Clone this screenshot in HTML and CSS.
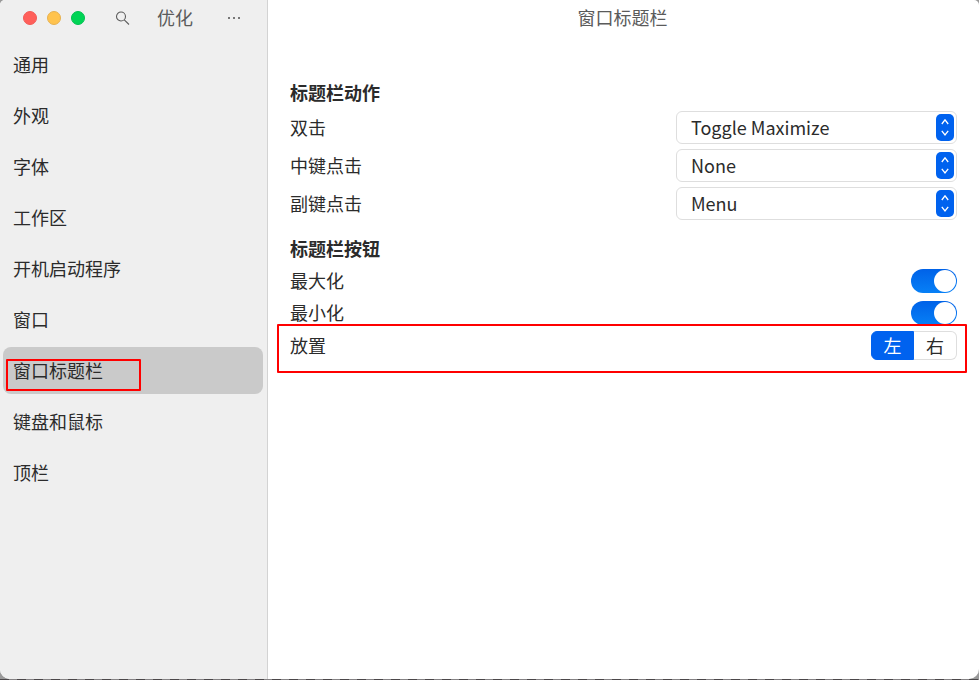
FILE: index.html
```html
<!DOCTYPE html>
<html lang="zh-CN">
<head>
<meta charset="utf-8">
<title>优化</title>
<link rel="stylesheet" href="styles.css">
</head>
<body>
<div class="window">
  <aside class="sidebar">
    <header class="side-header">
      <div class="lights"><i class="light close"></i><i class="light min"></i><i class="light max"></i></div>
      <svg class="search" width="16" height="16" viewBox="0 0 16 16"><circle cx="6" cy="6.5" r="4.5"/><path d="M9.3 9.8L14 14.5"/></svg>
      <span class="app-name">优化</span>
      <svg class="more" width="14" height="4" viewBox="0 0 14 4"><path d="M1 1h2v2H1zM6 1h2v2H6zM11 1h2v2h-2z"/></svg>
    </header>
    <nav class="nav">
      <div class="item">通用</div>
      <div class="item">外观</div>
      <div class="item">字体</div>
      <div class="item">工作区</div>
      <div class="item">开机启动程序</div>
      <div class="item">窗口</div>
      <div class="item selected">窗口标题栏<span class="mark mark-nav"></span></div>
      <div class="item">键盘和鼠标</div>
      <div class="item">顶栏</div>
    </nav>
  </aside>
  <main class="main">
    <header class="title">窗口标题栏</header>
    <section class="content">
      <h2>标题栏动作</h2>
      <div class="row action"><span class="label">双击</span><div class="select"><span class="label">Toggle Maximize</span><span class="stepper"><svg width="18" height="27" viewBox="0 0 18 27"><path d="M5.8 10L9 5.8L12.2 10M5.8 16.8L9 21L12.2 16.8"/></svg></span></div></div>
      <div class="row action"><span class="label">中键点击</span><div class="select"><span class="label">None</span><span class="stepper"><svg width="18" height="27" viewBox="0 0 18 27"><path d="M5.8 10L9 5.8L12.2 10M5.8 16.8L9 21L12.2 16.8"/></svg></span></div></div>
      <div class="row action"><span class="label">副键点击</span><div class="select"><span class="label">Menu</span><span class="stepper"><svg width="18" height="27" viewBox="0 0 18 27"><path d="M5.8 10L9 5.8L12.2 10M5.8 16.8L9 21L12.2 16.8"/></svg></span></div></div>
      <h2 class="second">标题栏按钮</h2>
      <div class="row toggle"><span class="label">最大化</span><div class="switch"><i></i></div></div>
      <div class="row toggle"><span class="label">最小化</span><div class="switch"><i></i></div></div>
      <div class="row placement"><span class="label">放置</span><div class="segment"><b class="on">左</b><b>右</b></div><span class="mark mark-row"></span></div>
    </section>
  </main>
</div>
</body>
</html>
```
FILE: styles.css
```css
* { box-sizing: border-box; }
body {
  margin: 0;
  height: 680px;
  overflow: hidden;
  background: repeating-linear-gradient(90deg, #4b4749 0 9px, #858284 9px 17px) 0 679px / 100% 1px no-repeat, #999;
  font: 18px/26px "Noto Sans CJK SC", sans-serif;
  color: #2b2b2b;
}
.window {
  display: flex;
  height: 679px;
  border-radius: 5px 5px 10px 10px;
  overflow: hidden;
  background: #fff;
}
.sidebar {
  width: 268px;
  flex: none;
  background: #efefef;
  border-right: 1px solid #d3d3d3;
}
.side-header {
  display: flex;
  align-items: center;
  height: 36px;
  padding-left: 23px;
  color: #5b5b5b;
}
.lights { display: flex; gap: 10px; }
.light { width: 14px; height: 14px; border-radius: 50%; }
.close { background: #ff5f5a; border: 1px solid #f35a56; }
.min { background: #ffc34e; border: 1px solid #e7b150; }
.max { background: #00d455; border: 1px solid #00c050; }
.search { margin-left: 30px; fill: none; stroke: #5b5b5b; stroke-width: 1.1; }
.app-name { margin-left: 26px; padding-bottom: 2px; }
.more { margin-left: 34px; fill: #777; }
.nav {
  display: flex;
  flex-direction: column;
  gap: 4px;
  padding: 5px 4px 0 3px;
}
.item {
  position: relative;
  height: 47px;
  padding: 10px 10px 11px;
  border-radius: 8px;
}
.selected { background: #cacaca; }
.mark { position: absolute; border: 2px solid #f00; border-radius: 1px; }
.mark-nav { left: 3px; top: 12px; width: 135px; height: 32px; }
.main { flex: 1; }
.title {
  height: 36px;
  padding: 4px 2px 0 0;
  text-align: center;
  color: #5b5b5b;
}
.content { padding: 43px 22px 0; }
h2 { margin: 0; font-size: 18px; line-height: 26px; font-weight: 700; }
.row { display: flex; justify-content: space-between; align-items: center; }
.label { padding-bottom: 2px; }
.action { height: 33px; margin-top: 5px; }
h2 + .action { margin-top: 6px; }
.select {
  display: flex;
  justify-content: space-between;
  align-items: center;
  width: 281px;
  height: 33px;
  padding: 0 2px 0 14px;
  border: 1px solid #dedede;
  border-radius: 6px;
}
.stepper {
  width: 18px;
  height: 27px;
  border-radius: 5px;
  background: #0062ef;
}
.stepper svg { display: block; fill: none; stroke: #fff; stroke-width: 1.3; }
.content .second { margin-top: 15px; }
.toggle { height: 32px; }
.second + .toggle { margin-top: 4px; }
.switch {
  display: flex;
  justify-content: flex-end;
  width: 46px;
  height: 24px;
  padding: 1px;
  border-radius: 12px;
  background: linear-gradient(#0062e8, #0780f6);
}
.switch i { width: 22px; height: 22px; border-radius: 50%; background: #fff; }
.placement { position: relative; height: 33px; }
.segment { display: flex; width: 86px; height: 29px; }
.segment b {
  width: 43px;
  font-weight: 400;
  line-height: 27px;
  text-align: center;
  border: 1px solid #dedede;
  border-left: 0;
  border-radius: 0 6px 6px 0;
}
.segment .on {
  background: #0062ef;
  color: #fff;
  border: 1px solid #0062ef;
  border-radius: 6px 0 0 6px;
}
.mark-row { left: -13px; top: -5px; width: 690px; height: 49px; }
```
